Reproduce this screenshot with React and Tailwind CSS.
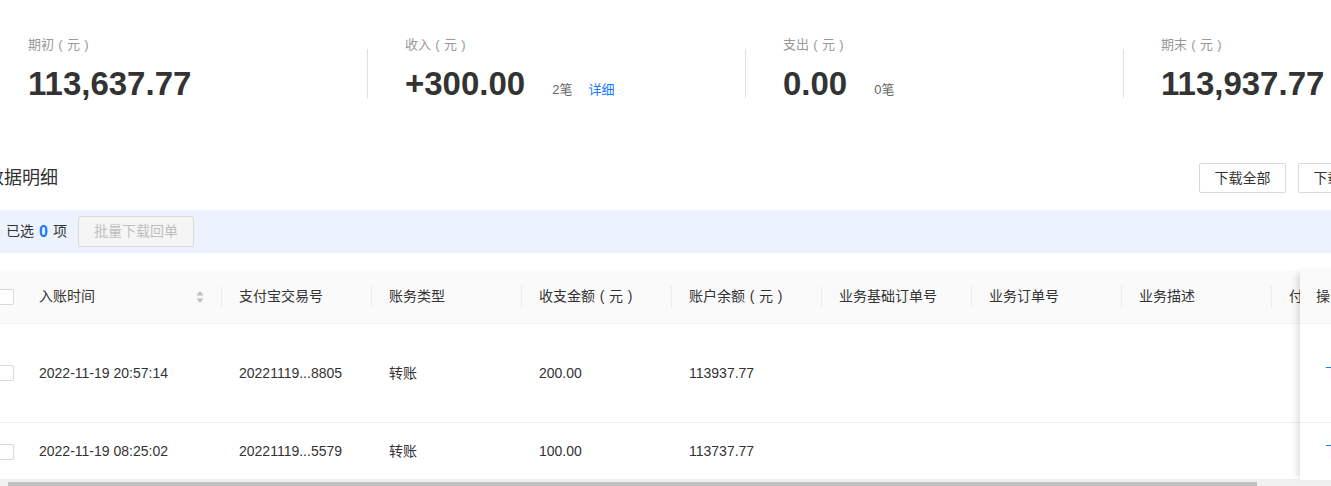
import { useState } from 'react'

const FONT = { fontFamily: '"Liberation Sans", "Noto Sans CJK SC", sans-serif' }

const STATS = [
  { label: '期初', value: '113,637.77' },
  { label: '收入', value: '+300.00', count: '2笔', link: '详细' },
  { label: '支出', value: '0.00', count: '0笔' },
  { label: '期末', value: '113,937.77' },
]

const COLS = [
  { name: '支付宝交易号' },
  { name: '账务类型' },
  { name: '收支金额', unit: true },
  { name: '账户余额', unit: true },
  { name: '业务基础订单号' },
  { name: '业务订单号' },
  { name: '业务描述' },
  { name: '付款' },
]

const ROWS = [
  { time: '2022-11-19 20:57:14', no: '20221119...8805', type: '转账', amount: '200.00', balance: '113937.77', h: 'h-[99px]' },
  { time: '2022-11-19 08:25:02', no: '20221119...5579', type: '转账', amount: '100.00', balance: '113737.77', h: 'h-[58px]' },
]

// 括号居中在一个字宽里，和原图（元）一样
function Yuan() {
  return (
    <>
      <span className="inline-block w-[1em] text-center">(</span>元<span className="inline-block w-[1em] text-center">)</span>
    </>
  )
}

function Checkbox() {
  return <span className="block w-4 h-4 rounded-[2px] border border-[#d9d9d9] bg-white shrink-0" />
}

function SortIcon() {
  return (
    <svg width="8" height="14" viewBox="0 0 8 14" className="shrink-0">
      <path d="M4 1 L7.5 5.5 L0.5 5.5 Z" fill="#bfbfbf" />
      <path d="M4 13 L7.5 8.5 L0.5 8.5 Z" fill="#bfbfbf" />
    </svg>
  )
}

function Sep() {
  return <span className="w-px h-[22px] bg-[#ececec] shrink-0" />
}

export default function App() {
  const [selected] = useState(0)

  return (
    <div className="w-[1331px] h-[486px] overflow-hidden bg-white text-[#333]" style={FONT}>
      {/* 顶部统计 */}
      <div className="flex pt-[35px] w-[1600px]">
        {STATS.map((s, i) => (
          <div key={s.label} className="flex">
            {i > 0 && <span className="w-px h-[49px] mt-[14px] bg-[#e0e0e0]" />}
            <div className={i === 0 ? 'w-[367px] pl-[28px]' : 'w-[377px] pl-[37px]'}>
              <div className="h-5 leading-5 text-[13px] text-[#999] whitespace-nowrap">{s.label}<Yuan /></div>
              <div className="mt-[9px] h-10 flex items-center">
                <span className="text-[33px] font-bold leading-10 text-[#333]">{s.value}</span>
                {s.count && <span className="ml-[27px] mt-[12px] text-[13px] text-[#666]">{s.count}</span>}
                {s.link && <span className="ml-[16px] mt-[12px] text-[13px] text-[#1677ff]">{s.link}</span>}
              </div>
            </div>
          </div>
        ))}
      </div>

      {/* 标题 + 下载 */}
      <div className="mt-[59px] h-[30px] flex items-center -ml-[14px] w-[1399px]">
        <span className="text-[18px] leading-[30px] text-[#333]">数据明细</span>
        <div className="ml-auto flex gap-3">
          <button className="h-[30px] w-[87px] border border-[#d9d9d9] rounded-[2px] bg-white text-[14px] text-[#333]">下载全部</button>
          <button className="h-[30px] w-[87px] border border-[#d9d9d9] rounded-[2px] bg-white text-[14px] text-[#333]">下载明细</button>
        </div>
      </div>

      {/* 已选 */}
      <div className="mt-[17px] h-[43px] bg-[#edf3fe] flex items-center pl-[6px]">
        <span className="text-[14px] text-[#333]">已选</span>
        <span className="mx-[5px] text-[16px] font-bold text-[#1677ff]">{selected}</span>
        <span className="text-[14px] text-[#333]">项</span>
        <button className="ml-[11px] h-[31px] w-[116px] border border-[#d9d9d9] rounded-[2px] bg-[#f5f5f5] text-[14px] text-[#bfbfbf]">批量下载回单</button>
      </div>

      {/* 表格 */}
      <div className="mt-[17px] flex -ml-[14px]">
        <div className="w-[1314px] overflow-hidden shrink-0">
          <div className="w-[1600px]">
            <div className="h-[54px] bg-[#fafafa] border-b border-[#f0f0f0] flex items-center text-[14px]">
              <div className="w-[36px] pl-[12px] flex"><Checkbox /></div>
              <div className="w-[200px] pl-[17px] flex items-center">
                <span>入账时间</span>
                <span className="ml-auto mr-[17px]"><SortIcon /></span>
                <Sep />
              </div>
              {COLS.map((c) => (
                <div key={c.name} className="w-[150px] pl-[17px] flex items-center">
                  <span className="whitespace-nowrap">{c.name}{c.unit && <Yuan />}</span>
                  <span className="ml-auto" />
                  <Sep />
                </div>
              ))}
            </div>
            {ROWS.map((r) => (
              <div key={r.time} className={`${r.h} border-b border-[#f0f0f0] flex items-center text-[14px] text-[#333]`}>
                <div className="w-[36px] pl-[12px] flex"><Checkbox /></div>
                <div className="w-[200px] pl-[17px]">{r.time}</div>
                <div className="w-[150px] pl-[17px]">{r.no}</div>
                <div className="w-[150px] pl-[17px]">{r.type}</div>
                <div className="w-[150px] pl-[17px]">{r.amount}</div>
                <div className="w-[150px] pl-[17px]">{r.balance}</div>
              </div>
            ))}
          </div>
        </div>
        <div className="w-[120px] shrink-0 bg-white shadow-[-6px_0_6px_-3px_rgba(0,0,0,0.12)]">
          <div className="h-[54px] bg-[#fafafa] border-b border-[#f0f0f0] flex items-center pl-[16px] text-[14px]">操作</div>
          {ROWS.map((r) => (
            <div key={r.time} className={`${r.h} border-b border-[#f0f0f0] flex items-center pl-[25px] text-[14px] text-[#1677ff]`}>下载</div>
          ))}
        </div>
      </div>

      {/* 横向滚动条 */}
      <div className="-mt-[2px] h-[10px] bg-[#f1f1f1] pt-[3px]">
        <div className="ml-[8px] w-[1249px] h-[7px] bg-[#c1c1c1]" />
      </div>
    </div>
  )
}
